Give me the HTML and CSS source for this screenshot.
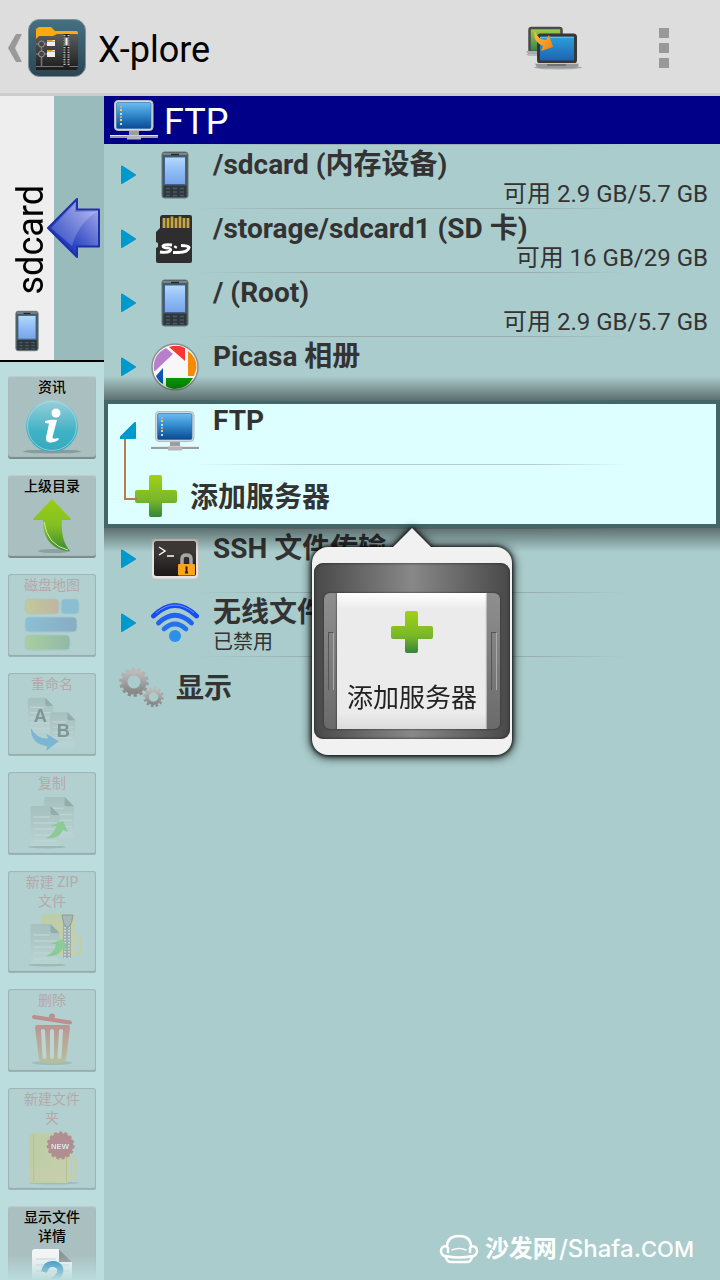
FILE: index.html
```
<!DOCTYPE html>
<html lang="zh-CN">
<head>
    <meta charset="UTF-8">
    <meta name="viewport" content="width=device-width, initial-scale=1.0">
    <title>X-plore</title>
    <link rel="stylesheet" href="styles.css">
</head>
<body>
    <!-- shared icons -->
    <svg class="sprite" width="0" height="0" aria-hidden="true">
        <defs>
            <linearGradient id="g-screen" x1="0" y1="0" x2="0" y2="1">
                <stop offset="0" stop-color="#6cbcf0"/><stop offset=".5" stop-color="#2f86c8"/><stop offset="1" stop-color="#0a4a94"/>
            </linearGradient>
            <linearGradient id="g-phone" x1="0" y1="0" x2="0" y2="1">
                <stop offset="0" stop-color="#b4dafb"/><stop offset=".5" stop-color="#8fbcf4"/><stop offset="1" stop-color="#78a4ea"/>
            </linearGradient>
            <linearGradient id="g-plus" x1="0" y1="0" x2="0" y2="1">
                <stop offset="0" stop-color="#a3d017"/><stop offset=".6" stop-color="#78b728"/><stop offset="1" stop-color="#33853a"/>
            </linearGradient>
            <linearGradient id="g-page" x1="0" y1="0" x2="0" y2="1">
                <stop offset="0" stop-color="#a6bfbf"/><stop offset="1" stop-color="#b9d2d2"/>
            </linearGradient>
            <linearGradient id="g-folder" x1="0" y1="0" x2="1" y2="1">
                <stop offset="0" stop-color="#bccda4"/><stop offset="1" stop-color="#c7cfae"/>
            </linearGradient>
        </defs>
        <symbol id="phone" viewBox="0 0 28 48">
            <rect x="1" y="1" width="26" height="46" rx="2.500" fill="#4a585a" stroke="#66787a"/>
            <path d="M2 3h24" stroke="#75878a" stroke-width="2"/>
            <path d="M10 3.500h8" stroke="#222" stroke-width="1.400"/>
            <rect x="3.500" y="6" width="21" height="27.500" fill="url(#g-phone)" stroke="#416292" stroke-width="1"/>
            <path d="M2.500 34.500h23v11.500h-23z" fill="#2e383a"/>
            <path d="M5 37.500h4M12 37.500h4M19 37.500h4M5 41h4M12 41h4M19 41h4M5 44.500h4M12 44.500h4M19 44.500h4" stroke="#465a68" stroke-width="1.500"/>
        </symbol>
        <symbol id="monitor" viewBox="0 0 48 42">
            <rect x="4.500" y="1.500" width="38.500" height="30" rx="3.500" fill="#d3d8dc" stroke="#b8bdc2"/>
            <rect x="6.500" y="3.500" width="34.500" height="26" rx="1.500" fill="url(#g-screen)" stroke="#2a6da8" stroke-width=".6"/>
            <path d="M10 7h2v2h-2zM10 17h2v2h-2z" fill="#d8a184"/>
            <path d="M10 10h2v2h-2zM10 20h2v2h-2z" fill="#e4d06b"/>
            <path d="M10 14h2v2h-2zM10 24h2v2h-2z" fill="#c8dce8"/>
            <path d="M19 32h10v5h-10z" fill="#9b9da0"/>
            <path d="M0 36h48v3H0z" fill="#9a9ca0"/>
            <path d="M0 36h48v1H0z" fill="#e8e8e8"/>
            <path d="M17 36.500h14v4H17z" fill="#b3b5b8"/>
        </symbol>
        <symbol id="plus" viewBox="0 0 44 44">
            <path d="M17 1h9a2 2 0 0 1 2 2v13h13a2 2 0 0 1 2 2v9a2 2 0 0 1-2 2H28v12a2 2 0 0 1-2 2h-9a2 2 0 0 1-2-2V29H3a2 2 0 0 1-2-2v-9a2 2 0 0 1 2-2h12V3a2 2 0 0 1 2-2z" fill="url(#g-plus)"/>
        </symbol>
        <symbol id="closed" viewBox="0 0 17 20">
            <path d="M2 1.500L15 10L2 18z" fill="#0099cc" stroke="#0099cc" stroke-width="2" stroke-linejoin="round"/>
        </symbol>
        <symbol id="opened" viewBox="0 0 17 20">
            <path d="M15 2v15H0z" fill="#0099cc" stroke="#0099cc" stroke-width="2" stroke-linejoin="round"/>
        </symbol>
        <symbol id="page" viewBox="0 0 32 42">
            <path d="M3 1h18l9 9v29a2 2 0 0 1-2 2H3a2 2 0 0 1-2-2V3a2 2 0 0 1 2-2z" fill="url(#g-page)"/>
            <path d="M4 12h16M4 18h24M4 24h24M4 30h24M4 36h24" stroke="#bcd4d4" stroke-width="1.500"/>
            <path d="M21 1v7q0 2 2 2h7z" fill="#92abab"/>
        </symbol>
        <symbol id="curve" viewBox="0 0 24 20">
            <path d="M1 18Q10 14 11 6L5 6L18 1L23 12L18 10Q13 20 1 18z" fill="#8ccb97"/>
        </symbol>
    </svg>

    <header class="action-bar">
        <button class="home" aria-label="返回">
            <svg width="14" height="28" viewBox="0 0 14 28"><path d="M8 0h6L7 14l7 14H8L0 14z" fill="#999"/></svg>
            <svg width="58" height="58" viewBox="0 0 58 58">
                <defs>
                    <linearGradient id="g-app" x1="0" y1="0" x2="0" y2="1"><stop offset="0" stop-color="#477082"/><stop offset="1" stop-color="#2b4552"/></linearGradient>
                    <linearGradient id="g-case" x1="0" y1="0" x2="0" y2="1"><stop offset="0" stop-color="#5c5c5c"/><stop offset="1" stop-color="#1c1c1c"/></linearGradient>
                </defs>
                <rect x=".5" y=".5" width="57" height="57" rx="11" fill="url(#g-app)" stroke="#7b929b"/>
                <path d="M8 20V10l3-2h12l4 4h22l1 2v4z" fill="#ffa90f"/>
                <path d="M8 20l3-3h14l4-2h21v34l-2 2H8z" fill="url(#g-case)"/>
                <path d="M8 47.500h42" stroke="#777"/>
                <path d="M8 25h11M8 35h11M13.500 25v22" stroke="#777" stroke-width="1.500" fill="none"/>
                <circle cx="13.500" cy="25" r="3" fill="#444" stroke="#999"/><circle cx="13.500" cy="35" r="3" fill="#444" stroke="#999"/>
                <path d="M19 22h3v-1h5v6h-8zM19 32h3v-1h5v7h-8z" fill="#eee"/>
                <path d="M19 21h5l1 1h2v1h-8zM19 31h5l1 1h2v1h-8z" fill="#f39a1c"/>
                <path d="M38.500 15v33" stroke="#222" stroke-width="6"/>
                <path d="M36.500 16v30M40.500 16v30" stroke="#c4c4c4" stroke-width="2" stroke-dasharray="1.200 1.200"/>
                <path d="M36 18h5v9h-5z" fill="#777"/><path d="M37.500 19h2v7h-2z" fill="#eee"/>
            </svg>
            <span>X-plore</span>
        </button>
        <button class="action" aria-label="切换窗格">
            <svg width="56" height="44" viewBox="0 0 56 44">
                <defs>
                    <linearGradient id="g-lap1" x1="0" y1="0" x2="0" y2="1"><stop offset="0" stop-color="#a3cf4c"/><stop offset="1" stop-color="#2f7d4c"/></linearGradient>
                    <linearGradient id="g-lap2" x1="0" y1="0" x2="0" y2="1"><stop offset="0" stop-color="#2fa2de"/><stop offset="1" stop-color="#1b61ad"/></linearGradient>
                    <linearGradient id="g-swap" x1="0" y1="0" x2="1" y2="1"><stop offset="0" stop-color="#ffc13a"/><stop offset="1" stop-color="#ef7d14"/></linearGradient>
                </defs>
                <ellipse cx="32" cy="41.500" rx="24" ry="2" fill="#aaa"/>
                <path d="M0 28h14v2H2z" fill="#bbb"/>
                <rect x="3.500" y="2" width="32" height="24" rx="2" fill="url(#g-lap1)" stroke="#4a4a4a" stroke-width="2.500"/>
                <path d="M0 25h14v3H2z" fill="#a9abad"/>
                <rect x="12.500" y="9" width="37" height="27" rx="2" fill="url(#g-lap2)" stroke="#3a3636" stroke-width="3"/>
                <path d="M14 11.500h34" stroke="#58bdec"/>
                <path d="M9 37h44l-1 3q-1 2-4 2H14q-3 0-4-2z" fill="#96989c"/>
                <path d="M9 37h44v1H9z" fill="#c7c9cc"/>
                <path d="M21 39h19" stroke="#666" stroke-width="1.500"/>
                <path d="M9 5Q12 14 20 14L23 9L27 21L15 25L17 20Q6 15 9 5z" fill="url(#g-swap)"/>
            </svg>
        </button>
        <button class="action menu" aria-label="更多选项"><i></i><i></i><i></i></button>
    </header>

    <div class="panes">
        <aside class="side">
            <button class="tab">
                <span class="tab-label">
                    <span class="tab-text">sdcard</span>
                    <svg width="24" height="42"><use href="#phone"/></svg>
                </span>
                <svg class="tab-arrow" width="53" height="60" viewBox="0 0 53 60">
                    <defs>
                        <linearGradient id="g-arr" x1="0" y1="1" x2="1" y2="0"><stop offset=".3" stop-color="#1f3cc0"/><stop offset="1" stop-color="#b6b8f2"/></linearGradient>
                    </defs>
                    <path d="M1 30L30 1V11.500H52V48.500H30V59z" fill="url(#g-arr)" stroke="#2130a8" stroke-width="2" stroke-linejoin="round"/>
                    <path d="M4 30L28 6V14H50Q32 24 25 48z" fill="#fff" opacity=".2"/>
                </svg>
            </button>
            <div class="tools">
                <button class="tool">
                    <span>资讯</span>
                    <svg width="60" height="54" viewBox="0 0 60 54">
                        <defs><linearGradient id="g-info" x1="0" y1="0" x2="0" y2="1"><stop offset="0" stop-color="#9ccfd8"/><stop offset=".6" stop-color="#3fb2c6"/><stop offset="1" stop-color="#38a9bd"/></linearGradient></defs>
                        <ellipse cx="30" cy="51.500" rx="29" ry="2" fill="#7e9394" opacity=".8"/>
                        <circle cx="30" cy="26" r="26" fill="url(#g-info)"/>
                        <circle cx="30" cy="26" r="24.500" fill="none" stroke="#b9e2e8" stroke-width="1" opacity=".6"/>
                        <circle cx="34" cy="13" r="4.500" fill="#fff"/>
                        <path d="M23 21q6-2 12-1L30.500 37q0 2.500 3 1.500l3-.5v2q-5 3-9 2.500q-4-.5-3.500-5L27 23.500l-4-.500z" fill="#fff"/>
                    </svg>
                </button>
                <button class="tool">
                    <span>上级目录</span>
                    <svg width="60" height="54" viewBox="0 0 60 54">
                        <defs><linearGradient id="g-up" x1="0" y1="0" x2="0" y2="1"><stop offset="0" stop-color="#98cf14"/><stop offset=".5" stop-color="#84c023"/><stop offset="1" stop-color="#3a8a35"/></linearGradient></defs>
                        <ellipse cx="32" cy="52" rx="16" ry="2" fill="#7e9394" opacity=".7"/>
                        <path d="M30 0L49 20q0 1-1 1H40C39 36 42 45 48 52C30 51 21 40 21 21H12q-1 0-1-1z" fill="url(#g-up)"/>
                        <path d="M22 23Q25 46 46 51" fill="none" stroke="#d2ec9a" stroke-width="1"/>
                    </svg>
                </button>
                <button class="tool" disabled>
                    <span>磁盘地图</span>
                    <svg width="60" height="54" viewBox="0 0 60 54">
                        <defs>
                            <linearGradient id="g-d1"><stop offset="0" stop-color="#c3c99b"/><stop offset="1" stop-color="#bfb5a0"/></linearGradient>
                            <linearGradient id="g-d2"><stop offset="0" stop-color="#8bbfd4"/><stop offset="1" stop-color="#88acc3"/></linearGradient>
                            <linearGradient id="g-d3"><stop offset="0" stop-color="#a9cea0"/><stop offset="1" stop-color="#92b9a7"/></linearGradient>
                        </defs>
                        <g stroke="#a4c8cc" stroke-width="1">
                            <rect x="3" y="1" width="34" height="15" rx="4" fill="url(#g-d1)"/>
                            <rect x="39" y="1" width="18" height="15" rx="4" fill="#8bbdd3"/>
                            <rect x="3" y="19" width="52" height="15" rx="4" fill="url(#g-d2)"/>
                            <rect x="3" y="37" width="45" height="15" rx="4" fill="url(#g-d3)"/>
                        </g>
                    </svg>
                </button>
                <button class="tool" disabled>
                    <span>重命名</span>
                    <svg width="60" height="56" viewBox="0 0 60 56">
                        <use href="#page" x="4" y="0" width="29" height="38"/>
                        <use href="#page" x="27" y="15" width="29" height="38"/>
                        <text x="11" y="26" class="glyph">A</text>
                        <text x="35" y="41" class="glyph">B</text>
                        <path d="M8 32Q14 44 26 43L24 38L37 46L24 56L25 51Q8 49 8 32z" fill="#7db6d2"/>
                    </svg>
                </button>
                <button class="tool" disabled>
                    <span>复制</span>
                    <svg width="60" height="54" viewBox="0 0 60 54">
                        <ellipse cx="25" cy="51" rx="19" ry="1.500" fill="#9db8b8"/>
                        <use href="#page" x="21" y="0" width="33" height="43"/>
                        <use href="#page" x="7" y="9" width="33" height="42"/>
                        <use href="#curve" x="23" y="24" width="24" height="20"/>
                    </svg>
                </button>
                <button class="tool" disabled>
                    <span>新建 ZIP<br>文件</span>
                    <svg width="60" height="54" viewBox="0 0 60 54">
                        <ellipse cx="25" cy="51" rx="19" ry="1.500" fill="#9db8b8"/>
                        <path d="M54 24h3q2 0 2 3v10q0 3-2 3h-3" fill="none" stroke="#c4cda4" stroke-width="2.500"/>
                        <path d="M19 4q0-4 4-4h28q3 0 3 4v38H19z" fill="url(#g-folder)"/>
                        <path d="M45 4v40" stroke="#9cafaf" stroke-width="8"/>
                        <path d="M43 10v34M47 10v34" stroke="#c9d5d5" stroke-width="2" stroke-dasharray="1.500 1.500"/>
                        <path d="M40 1q1 9 4 12h3q3-3 4-12z" fill="#a7b8b8" stroke="#8a9d9d"/>
                        <use href="#page" x="7" y="9" width="33" height="42"/>
                        <use href="#curve" x="23" y="24" width="24" height="20"/>
                    </svg>
                </button>
                <button class="tool" disabled>
                    <span>删除</span>
                    <svg width="60" height="54" viewBox="0 0 60 54">
                        <defs><linearGradient id="g-bin" x1="0" y1="0" x2="0" y2="1"><stop offset="0" stop-color="#bb9492"/><stop offset="1" stop-color="#b7c09d"/></linearGradient></defs>
                        <ellipse cx="30" cy="50" rx="20" ry="2" fill="#a0bbbb"/>
                        <path d="M12 4L48 9.500" stroke="#ba8f8e" stroke-width="4" stroke-linecap="round"/>
                        <circle cx="30" cy="3.500" r="3" fill="#ba8f8e"/>
                        <path d="M15 12h31q2 0 2 3L44 46q-1 4-5 4H22q-4 0-5-4L13 15q0-3 2-3z" fill="url(#g-bin)"/>
                        <path d="M21 18l1.500 26M30 18v26M39 18l-1.500 26" stroke="#bdd6d5" stroke-width="4" stroke-linecap="round"/>
                    </svg>
                </button>
                <button class="tool" disabled>
                    <span>新建文件<br>夹</span>
                    <svg width="60" height="56" viewBox="0 0 60 56">
                        <ellipse cx="32" cy="54" rx="26" ry="1.500" fill="#a0bbbb"/>
                        <path d="M48 28h4q2 0 2 3v14q0 3-3 3h-3" fill="none" stroke="#c4cda4" stroke-width="3"/>
                        <rect x="6" y="2" width="43" height="52" rx="5" fill="url(#g-folder)"/>
                        <path d="M11 4v48M45 4v48" stroke="#b2c193" stroke-width="1"/>
                        <circle cx="39" cy="15" r="13" fill="#b08e91" stroke="#b08e91" stroke-width="3" stroke-dasharray="3 2.400"/>
                        <text x="29" y="19" class="new">NEW</text>
                    </svg>
                </button>
                <button class="tool">
                    <span>显示文件<br>详情</span>
                    <svg width="60" height="54" viewBox="0 0 60 54">
                        <path d="M13 0h24l13 13v41H10V3q0-3 3-3z" fill="#f2f4f5"/>
                        <path d="M14 10h20M14 16h33M14 22h33" stroke="#d9dddf" stroke-width="1.500"/>
                        <path d="M37 0v13h13z" fill="#8d9696"/>
                        <path d="M22 23q2-9 10-8q8 2 6 9q-2 4-6 7v5" fill="none" stroke="#2b8ec6" stroke-width="6"/>
                    </svg>
                </button>
            </div>
        </aside>

        <main class="browser">
            <h1 class="path"><svg width="48" height="42"><use href="#monitor"/></svg><span>FTP</span></h1>
            <ul class="tree">
                <li><button class="row">
                    <svg width="17" height="20"><use href="#closed"/></svg>
                    <svg width="48" height="48"><use href="#phone"/></svg>
                    <span class="text"><b>/sdcard (内存设备)</b><small class="free">可用 2.9 GB/5.7 GB</small></span>
                </button></li>
                <li><button class="row">
                    <svg width="17" height="20"><use href="#closed"/></svg>
                    <svg width="48" height="48" viewBox="0 0 48 48">
                        <path d="M12 0h27q2 0 2 2v44q0 2-2 2H7q-2 0-2-2V33l2-1v-4l-2-1V17l4-4V3q0-3 3-3z" fill="#2e2e2e"/>
                        <path d="M13 3v10M17 3v10M21 1.500v11.500M25 3v10M29 1.500v11.500M33 3v10M37 3v10" stroke="#c6a63f" stroke-width="2.800"/>
                        <path d="M21 30q-8-1-9 1q0 2 5 2q4 1 2 3q-3 2-10 1" fill="none" stroke="#fff" stroke-width="2.800"/>
                        <path d="M25 31l-1 2M22 37.500h5q10 0 11-5q-1-2-8-2" fill="none" stroke="#fff" stroke-width="3"/>
                    </svg>
                    <span class="text"><b>/storage/sdcard1 (SD 卡)</b><small class="free">可用 16 GB/29 GB</small></span>
                </button></li>
                <li><button class="row">
                    <svg width="17" height="20"><use href="#closed"/></svg>
                    <svg width="48" height="48"><use href="#phone"/></svg>
                    <span class="text"><b>/ (Root)</b><small class="free">可用 2.9 GB/5.7 GB</small></span>
                </button></li>
                <li><button class="row">
                    <svg width="17" height="20"><use href="#closed"/></svg>
                    <svg width="48" height="48" viewBox="0 0 48 48">
                        <circle cx="24" cy="24" r="23" fill="#f7f7f7" stroke="#8b8f90" stroke-width="1.500"/>
                        <path d="M3 28Q1 12 15 5L22 11L4 28z" fill="#b77fcb"/>
                        <path d="M18 4Q27 1 34 5V18z" fill="#fb3434"/>
                        <path d="M37 8Q46 14 45.500 25L43 33H37z" fill="#f48a05"/>
                        <path d="M42 35Q36 46 24 46Q18 45.500 15 43V35z" fill="#089c08"/>
                        <path d="M5 33L12 25V41Q7 38 5 33z" fill="#0f57b5"/>
                    </svg>
                    <span class="text"><b>Picasa 相册</b></span>
                </button></li>
                <li class="selected">
                    <button class="row">
                        <svg width="17" height="20"><use href="#opened"/></svg>
                        <svg width="48" height="42"><use href="#monitor"/></svg>
                        <span class="text"><b>FTP</b></span>
                    </button>
                    <button class="row child">
                        <svg width="44" height="44"><use href="#plus"/></svg>
                        <b class="plain">添加服务器</b>
                    </button>
                    <div class="popup">
                        <div class="frame">
                            <div class="grip"></div>
                            <button class="popup-item">
                                <svg width="44" height="44"><use href="#plus"/></svg>
                                <span>添加服务器</span>
                            </button>
                            <div class="grip"></div>
                        </div>
                    </div>
                </li>
                <li><button class="row">
                    <svg width="17" height="20"><use href="#closed"/></svg>
                    <svg width="48" height="42" viewBox="0 0 48 42">
                        <defs><linearGradient id="g-term" x1="0" y1="0" x2="0" y2="1"><stop offset="0" stop-color="#4a4541"/><stop offset="1" stop-color="#1a1817"/></linearGradient></defs>
                        <rect x=".5" y=".5" width="47" height="40.500" rx="4" fill="#e4e4e4" stroke="#c4c4c4"/>
                        <rect x="3" y="3" width="42" height="35" rx="2.500" fill="url(#g-term)"/>
                        <path d="M8 9l6 4-6 4M16 18h7" fill="none" stroke="#fff" stroke-width="1.500"/>
                        <path d="M31 27v-6q0-4 4.500-4t4.500 4v6" fill="none" stroke="#a6a6a6" stroke-width="3.500"/>
                        <rect x="27" y="26" width="17" height="11.500" rx="1" fill="#faa41a"/>
                        <path d="M35.500 29v6M34 34.500h3M34.500 29.500h2" stroke="#2b1e08" stroke-width="1.800"/>
                    </svg>
                    <span class="text"><b>SSH 文件传输</b></span>
                </button></li>
                <li><button class="row">
                    <svg width="17" height="20"><use href="#closed"/></svg>
                    <svg width="48" height="40" viewBox="0 0 48 40">
                        <g fill="none" stroke-width="4.800" stroke-linecap="round">
                            <path d="M2.500 13Q24-8 45.500 13" stroke="#164cf0"/>
                            <path d="M7.500 20Q24 4.500 40.500 20" stroke="#1f63ef"/>
                            <path d="M13 26Q24 16 35 26" stroke="#2373ee"/>
                        </g>
                        <path d="M5 10Q24-6 43 10" stroke="#6f93ff" fill="none"/>
                        <circle cx="24" cy="33" r="6" fill="#2a90ec"/>
                    </svg>
                    <span class="text"><b>无线文件传输</b><small>已禁用</small></span>
                </button></li>
                <li><button class="row settings">
                    <svg width="45" height="44" viewBox="0 0 45 44">
                        <defs><linearGradient id="g-gear" x1="0" y1="0" x2="0" y2="1"><stop offset="0" stop-color="#bcb9b9"/><stop offset="1" stop-color="#888"/></linearGradient></defs>
                        <g fill="none">
                            <circle cx="15" cy="17" r="9.500" stroke="url(#g-gear)" stroke-width="6"/>
                            <circle cx="15" cy="17" r="13.300" stroke="url(#g-gear)" stroke-width="3" stroke-dasharray="3.200 2.770"/>
                            <circle cx="34.500" cy="32" r="6.500" stroke="url(#g-gear)" stroke-width="3.500"/>
                            <circle cx="34.500" cy="32" r="9" stroke="url(#g-gear)" stroke-width="2.500" stroke-dasharray="2.500 2.210"/>
                        </g>
                    </svg>
                    <b class="plain">显示</b>
                </button></li>
            </ul>
            <footer class="mark">
                <svg width="40" height="30" viewBox="0 0 40 30" fill="none" stroke="#fff" stroke-width="2.500" stroke-linecap="round">
                    <path d="M8 13Q8 2 20 2T32 13M32 12q6 0 6 5q0 4-5 6q-1 5-5 5H12q-4 0-5-5q-5-2-5-6q0-5 6-5"/>
                    <path d="M9 18v-4M31 18v-4M6 22q14 3 28 0"/>
                    <path d="M13 16q7-3 14 0" stroke-width="1.500"/>
                </svg>
                <span class="mark-cn">沙发网</span><span class="mark-en">/Shafa.<span>COM</span></span>
            </footer>
        </main>
    </div>
</body>
</html>
```

FILE: styles.css
```
:root{
    --pane: #aacccc;
    --side: #bbdddd;
    --navy: #000088;
    --text: #333333;
    --font: Roboto, 'Noto Sans CJK SC', sans-serif;
}

*{
    box-sizing: border-box;
    margin: 0;
    padding: 0;
}

body{
    height: 100vh;
    overflow: hidden;
    display: flex;
    flex-direction: column;
    font-family: var(--font);
    color: var(--text);
    background-color: var(--pane);
}

button{
    border: 0;
    background: none;
    font-family: inherit;
    color: inherit;
    text-align: left;
}

svg{
    flex: none;
    display: block;
}

.sprite{
    position: absolute;
}

/* top bar */

.action-bar{
    flex: none;
    height: 96px;
    padding: 0 32px 0 8px;
    display: flex;
    align-items: center;
    background-color: #dddddd;
    box-shadow: inset 0 -3px #cccccc;
}

.home{
    margin-right: auto;
    display: flex;
    align-items: center;
    gap: 6px;
    font-size: 36px;
    color: #000;
}

.home span{
    padding: 4px 0 0 6px;
}

.action{
    height: 48px;
    display: flex;
    align-items: center;
    justify-content: center;
}

.menu{
    width: 48px;
    margin-left: 58px;
    flex-direction: column;
    gap: 5px;
}

.menu i{
    width: 10px;
    height: 10px;
    background-color: #999999;
}

.panes{
    flex: 1;
    min-height: 0;
    display: flex;
}

/* left column */

.side{
    flex: none;
    width: 104px;
    display: flex;
    flex-direction: column;
    background-color: var(--side);
}

.tab{
    flex: none;
    height: 266px;
    display: flex;
    position: relative;
    background-color: #99bbbb;
    border-bottom: 2px solid #000;
}

.tab-label{
    width: 54px;
    height: 100%;
    padding-bottom: 8px;
    display: flex;
    flex-direction: column;
    align-items: center;
    justify-content: flex-end;
    gap: 16px;
    background-color: #eeeeee;
}

.tab-text{
    writing-mode: vertical-rl;
    transform: rotate(180deg);
    padding-right: 8px;
    font-size: 36px;
    line-height: 42px;
    color: #000;
}

.tab-arrow{
    position: absolute;
    top: 102px;
    right: 4px;
}

.tools{
    flex: 1;
    min-height: 0;
    overflow: hidden;
    padding: 14px 8px 0;
    display: flex;
    flex-direction: column;
    gap: 16px;
    -webkit-mask-image: linear-gradient(to top, transparent, #000 24px);
    mask-image: linear-gradient(to top, transparent, #000 24px);
}

.tool{
    flex: none;
    padding-top: 2px;
    padding-bottom: 5px;
    display: flex;
    flex-direction: column;
    align-items: center;
    gap: 3px;
    font-size: 14px;
    font-weight: 500;
    line-height: 19px;
    text-align: center;
    color: #000;
    background-color: #aac0c0;
    border-radius: 3px;
    box-shadow: inset 0 1px 1px #bfcccc, inset 0 -2px 1px #7b8a8a;
}

.tool svg{
    height: 54px;
}

.tool:disabled{
    font-weight: 400;
    color: #b5a8a9;
    background-color: #b3d0d0;
    box-shadow: inset 0 0 1px 1px #9fb4b4, inset 0 -2px 1px #94a8a8;
}

.glyph{
    font: bold 19px 'Liberation Sans', sans-serif;
    fill: #7f9696;
}

.new{
    font: bold 8px 'Liberation Sans', sans-serif;
    fill: #d9e6e5;
}

/* file tree */

.browser{
    flex: 1;
    min-width: 0;
    display: flex;
    flex-direction: column;
}

.path{
    height: 48px;
    padding: 0 6px;
    display: flex;
    align-items: center;
    gap: 6px;
    font-size: 36px;
    font-weight: 400;
    color: #fff;
    background-color: var(--navy);
}

.path span{
    padding-top: 4px;
}

.tree{
    list-style: none;
}

.row{
    width: 100%;
    height: 64px;
    padding: 0 12px 2px 16px;
    display: flex;
    align-items: center;
    gap: 14px;
    font-size: 28px;
    line-height: 28px;
    background: linear-gradient(to right, transparent 90px, rgba(128, 128, 128, .4) 200px, rgba(128, 128, 128, .4) 70%, transparent 85%) top / 100% 1px no-repeat;
}

.text{
    flex: 1;
    align-self: flex-start;
    padding-top: 7px;
    display: flex;
    flex-direction: column;
}

.text small{
    font-size: 20px;
    line-height: 30px;
}

.text .free{
    align-self: flex-end;
    font-size: 24px;
}

.plain{
    padding-top: 4px;
}

.selected{
    position: relative;
    background-color: #ddffff;
    box-shadow: inset 0 0 0 4px #446666;
}

/* shade cast on the neighbouring rows */
.selected::before,
.selected::after{
    content: '';
    position: absolute;
    left: 0;
    right: 0;
    height: 24px;
    pointer-events: none;
}

.selected::before{
    bottom: 100%;
    background: linear-gradient(to top, rgba(0, 0, 0, .45), transparent);
}

.selected::after{
    top: 100%;
    background: linear-gradient(to bottom, rgba(0, 0, 0, .45), transparent);
}

.child{
    padding: 0 12px 0 30px;
    gap: 12px;
}

.settings{
    padding-left: 15px;
    gap: 12px;
}

/* line from the arrow to the child */
.child::before{
    content: '';
    position: absolute;
    left: 20px;
    top: 39px;
    width: 11px;
    height: 59px;
    border-left: 2px solid #b87a50;
    border-bottom: 2px solid #b87a50;
}

/* popup */

.popup{
    position: absolute;
    z-index: 1;
    left: 208px;
    top: 147px;
    width: 200px;
    padding: 16px 2px;
    border-radius: 16px;
    background-color: #f1f1f1;
    filter: drop-shadow(0 0 2px #000) drop-shadow(0 1px 5px #000);
}

.popup::before{
    content: '';
    position: absolute;
    left: 80px;
    top: -19px;
    border: solid transparent;
    border-width: 0 20px 20px;
    border-bottom-color: #f1f1f1;
}

.frame{
    padding: 30px 10px 10px;
    display: flex;
    border-radius: 9px;
    background: linear-gradient(to right, #484848, #888 50%, #484848);
    box-shadow: inset 0 0 3px #222;
}

.grip{
    width: 13px;
    flex: none;
    display: flex;
    align-items: center;
    justify-content: center;
    border-radius: 6px 0 0 6px;
    background: linear-gradient(#8f8f8f, #6a6a6a);
    box-shadow: 0 0 2px #222;
}

.grip:last-child{
    border-radius: 0 6px 6px 0;
}

.grip::before{
    content: '';
    width: 4px;
    height: 57px;
    border: 1px solid #555;
    border-right-color: #aaa;
    border-bottom: 0;
}

.popup-item{
    flex: 1;
    height: 136px;
    padding: 17px 0 14px;
    display: flex;
    flex-direction: column;
    align-items: center;
    justify-content: space-between;
    font-size: 26px;
    line-height: 34px;
    white-space: nowrap;
    color: #222;
    background: linear-gradient(#fff, #ebebeb 12%, #ebebeb 88%, #dcdcdc);
    box-shadow: 0 0 2px #222;
}

/* watermark */

.mark{
    margin-top: auto;
    padding: 0 26px 16px 0;
    display: flex;
    align-items: center;
    justify-content: flex-end;
    font-size: 24px;
    line-height: 30px;
    color: #fff;
}

.mark-cn{
    padding-left: 6px;
    font-weight: 700;
}

.mark-en{
    padding-left: 2px;
    font-family: Inter, sans-serif;
    font-weight: 500;
}

.mark-en span{
    font-size: 22px;
}
```
